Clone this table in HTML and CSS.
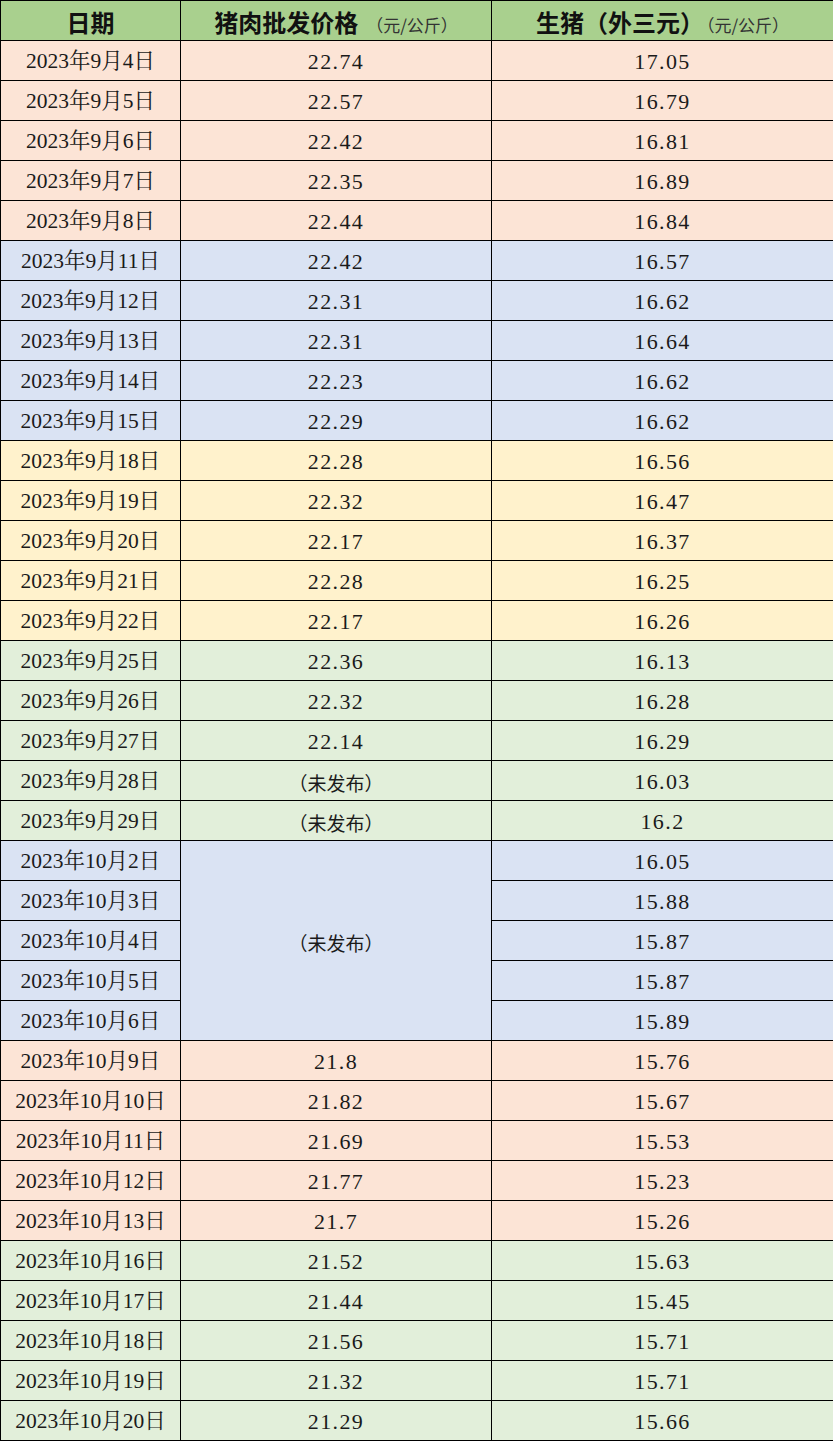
FILE: index.html
```html
<!DOCTYPE html>
<html lang="zh">
<head>
<meta charset="utf-8">
<link rel="stylesheet" href="styles.css">
</head>
<body>
<table class="prices">
  <colgroup><col class="c1"><col class="c2"><col class="c3"></colgroup>
  <thead>
    <tr class="head">
      <th>日期</th>
      <th>猪肉批发价格<span class="unit">（元/公斤）</span></th>
      <th>生猪（外三元）<span class="unit tight">（元/公斤）</span></th>
    </tr>
  </thead>
  <tbody>
    <tr class="peach"><td>2023年9月4日</td><td>22.74</td><td>17.05</td></tr>
    <tr class="peach"><td>2023年9月5日</td><td>22.57</td><td>16.79</td></tr>
    <tr class="peach"><td>2023年9月6日</td><td>22.42</td><td>16.81</td></tr>
    <tr class="peach"><td>2023年9月7日</td><td>22.35</td><td>16.89</td></tr>
    <tr class="peach"><td>2023年9月8日</td><td>22.44</td><td>16.84</td></tr>
    <tr class="blue"><td>2023年9月11日</td><td>22.42</td><td>16.57</td></tr>
    <tr class="blue"><td>2023年9月12日</td><td>22.31</td><td>16.62</td></tr>
    <tr class="blue"><td>2023年9月13日</td><td>22.31</td><td>16.64</td></tr>
    <tr class="blue"><td>2023年9月14日</td><td>22.23</td><td>16.62</td></tr>
    <tr class="blue"><td>2023年9月15日</td><td>22.29</td><td>16.62</td></tr>
    <tr class="yellow"><td>2023年9月18日</td><td>22.28</td><td>16.56</td></tr>
    <tr class="yellow"><td>2023年9月19日</td><td>22.32</td><td>16.47</td></tr>
    <tr class="yellow"><td>2023年9月20日</td><td>22.17</td><td>16.37</td></tr>
    <tr class="yellow"><td>2023年9月21日</td><td>22.28</td><td>16.25</td></tr>
    <tr class="yellow"><td>2023年9月22日</td><td>22.17</td><td>16.26</td></tr>
    <tr class="green"><td>2023年9月25日</td><td>22.36</td><td>16.13</td></tr>
    <tr class="green"><td>2023年9月26日</td><td>22.32</td><td>16.28</td></tr>
    <tr class="green"><td>2023年9月27日</td><td>22.14</td><td>16.29</td></tr>
    <tr class="green"><td>2023年9月28日</td><td class="na">（未发布）</td><td>16.03</td></tr>
    <tr class="green"><td>2023年9月29日</td><td class="na">（未发布）</td><td>16.2</td></tr>
    <tr class="blue"><td>2023年10月2日</td><td rowspan="5" class="na">（未发布）</td><td>16.05</td></tr>
    <tr class="blue"><td>2023年10月3日</td><td>15.88</td></tr>
    <tr class="blue"><td>2023年10月4日</td><td>15.87</td></tr>
    <tr class="blue"><td>2023年10月5日</td><td>15.87</td></tr>
    <tr class="blue"><td>2023年10月6日</td><td>15.89</td></tr>
    <tr class="peach"><td>2023年10月9日</td><td>21.8</td><td>15.76</td></tr>
    <tr class="peach"><td>2023年10月10日</td><td>21.82</td><td>15.67</td></tr>
    <tr class="peach"><td>2023年10月11日</td><td>21.69</td><td>15.53</td></tr>
    <tr class="peach"><td>2023年10月12日</td><td>21.77</td><td>15.23</td></tr>
    <tr class="peach"><td>2023年10月13日</td><td>21.7</td><td>15.26</td></tr>
    <tr class="green"><td>2023年10月16日</td><td>21.52</td><td>15.63</td></tr>
    <tr class="green"><td>2023年10月17日</td><td>21.44</td><td>15.45</td></tr>
    <tr class="green"><td>2023年10月18日</td><td>21.56</td><td>15.71</td></tr>
    <tr class="green"><td>2023年10月19日</td><td>21.32</td><td>15.71</td></tr>
    <tr class="green"><td>2023年10月20日</td><td>21.29</td><td>15.66</td></tr>
  </tbody>
</table>
</body>
</html>
```
FILE: styles.css
```css
html, body {
  margin: 0;
  padding: 0;
  background: #ffffff;
}

.prices {
  border-collapse: collapse;
  table-layout: fixed;
  width: 833px;
  font-family: "Liberation Serif", "Noto Serif CJK SC", "Noto Sans CJK SC", serif;
  font-size: 21.5px;
  color: #1a1a1a;
}

.c1 { width: 180px; }
.c2 { width: 311px; }
.c3 { width: 342px; }

.prices th,
.prices td {
  border: 1px solid #000;
  padding: 3px 0 0 0;
  box-sizing: border-box;
  text-align: center;
  vertical-align: middle;
  white-space: nowrap;
  line-height: 1;
}

.prices td {
  height: 40px;
}

.prices td:not(:first-child) {
  font-size: 22px;
  letter-spacing: 1.4px;
}

.head th {
  height: 40px;
  padding-top: 2px;
  background: #a9d08e;
  font-family: "Noto Sans CJK SC", sans-serif;
  font-weight: 700;
  font-size: 24px;
  color: #111;
}

.unit {
  font-weight: 400;
  font-size: 17px;
  margin-left: 8px;
  color: #333;
}

.unit.tight {
  margin-left: 2px;
}

.prices td.na {
  font-family: "Noto Sans CJK SC", sans-serif;
  font-size: 19px;
  letter-spacing: 0;
}

.peach td { background: #fce4d6; }
.blue td { background: #dae3f3; }
.yellow td { background: #fff2cc; }
.green td { background: #e2efda; }
```
